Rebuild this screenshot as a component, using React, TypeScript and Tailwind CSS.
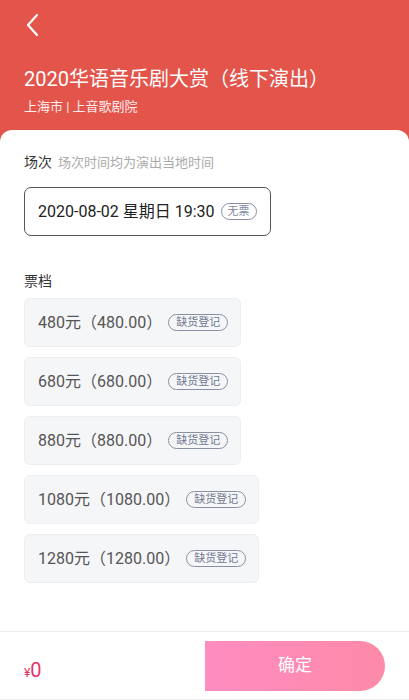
import React from "react";

const tiers = [
  { a: "480元", b: "480.00" },
  { a: "680元", b: "680.00" },
  { a: "880元", b: "880.00" },
  { a: "1080元", b: "1080.00" },
  { a: "1280元", b: "1280.00" },
];

export default function App() {
  return (
    <div
      className="w-[409px] h-[700px] bg-[#e3544b] flex flex-col overflow-hidden"
      style={{ fontFamily: 'Roboto, "Noto Sans CJK SC", sans-serif' }}
    >
      <div className="h-[130px] shrink-0 flex flex-col px-6">
        <div className="h-[48px] flex items-center">
          <svg width="14" height="24" viewBox="0 0 14 24" fill="none" className="ml-[1px] mt-[1px]">
            <path d="M12 2 L3 12 L12 22" stroke="white" strokeWidth="2.2" strokeLinecap="round" strokeLinejoin="round" />
          </svg>
        </div>
        <div className="mt-[17px] text-white text-[20px] leading-[28px]">2020华语音乐剧大赏（线下演出）</div>
        <div className="mt-[5px] text-white/90 text-[13px] leading-[18px]">上海市 | 上音歌剧院</div>
      </div>
      <div className="flex-1 bg-white rounded-t-[12px] flex flex-col">
        <div className="flex-1 px-6 pt-[22px]">
          <div className="flex items-baseline gap-[6px]">
            <span className="text-[14px] text-[#333]">场次</span>
            <span className="text-[13px] text-[#aaa]">场次时间均为演出当地时间</span>
          </div>
          <div className="mt-[14px] w-[247px] h-[49px] border-[1.5px] border-[#555] rounded-[7px] flex items-center pl-[13px]">
            <span className="text-[16px] text-[#222]">2020-08-02 星期日 19:30</span>
            <span className="ml-[6px] text-[11px] leading-[15px] text-[#8088a0] border border-[#8a90a4] rounded-full px-[6px]">无票</span>
          </div>
          <div className="mt-[35px] text-[14px] text-[#333]">票档</div>
          <div className="mt-[6px] flex flex-col gap-[10px] items-start">
            {tiers.map((t) => (
              <div
                key={t.a}
                className="h-[49px] bg-[#f5f6f8] border border-[#eceef1] rounded-[6px] flex items-center pl-[13px] pr-[12px]"
              >
                <span className="text-[16px] text-[#555]">
                  {t.a}（{t.b}）
                </span>
                <span className="ml-[6px] text-[11px] leading-[15px] text-[#707890] border border-[#8a90a4] rounded-full px-[7px]">
                  缺货登记
                </span>
              </div>
            ))}
          </div>
        </div>
        <div className="h-[69px] border-t border-b border-[#eeeeee] flex items-center justify-between pl-6 pr-[24px]">
          <div className="text-[#e6336b] flex items-baseline mt-[8px]">
            <span className="text-[12px]">¥</span>
            <span className="text-[20px]">0</span>
          </div>
          <div className="w-[180px] h-[50px] rounded-tl-[25px] rounded-r-full bg-gradient-to-r from-[#fe8cc0] to-[#fe8aa8] flex items-center justify-center text-white text-[17px]">
            确定
          </div>
        </div>
      </div>
    </div>
  );
}
